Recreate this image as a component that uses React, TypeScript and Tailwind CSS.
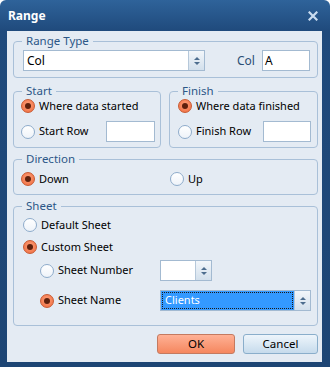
import React from "react";

const font = { fontFamily: '"Noto Sans", "Open Sans", sans-serif' };

function Radio({ on }: { on?: boolean }) {
  if (on)
    return (
      <span className="flex h-[14px] w-[14px] shrink-0 items-center justify-center rounded-full border border-[#c85a32] bg-[radial-gradient(circle_at_50%_40%,#ffa07a,#ee6a3c)]">
        <span className="h-[6px] w-[6px] rounded-full bg-[#5e200c]" />
      </span>
    );
  return (
    <span className="h-[14px] w-[14px] shrink-0 rounded-full border border-[#8eaccb] bg-[linear-gradient(#ffffff,#eef3f9)]" />
  );
}

function Spin() {
  return (
    <div className="flex w-[16px] shrink-0 flex-col items-center justify-center gap-[2px] border-l border-[#b6c8da] bg-[linear-gradient(#f2f6fa,#d3e0ec)]">
      <span className="h-0 w-0 border-x-[3px] border-b-[3px] border-x-transparent border-b-[#4d6d8e]" />
      <span className="h-0 w-0 border-x-[3px] border-t-[3px] border-x-transparent border-t-[#4d6d8e]" />
    </div>
  );
}

function Group({
  label,
  className,
  inner,
  children,
}: {
  label: string;
  className?: string;
  inner?: string;
  children: React.ReactNode;
}) {
  return (
    <fieldset className={"rounded-[4px] border border-[#a9c0d8] " + (className ?? "")}>
      <legend className="ml-[8px] px-[4px] text-[11.5px] leading-[14px] text-[#2c5787]">{label}</legend>
      <div className={inner}>{children}</div>
    </fieldset>
  );
}

export default function App() {
  return (
    <div
      className="flex h-[367px] w-[330px] flex-col rounded-t-[6px] bg-[linear-gradient(#2f639a,#1f4a7c_31px,#1d4574)] text-[11px] text-black"
      style={font}
    >
      <div className="flex h-[31px] shrink-0 items-center justify-between pl-[8px] pr-[12px]">
        <span className="text-[12px] font-bold text-white">Range</span>
        <svg width="10" height="10" viewBox="0 0 10 10">
          <path d="M1.5 1.5 L8.5 8.5 M8.5 1.5 L1.5 8.5" stroke="#c9dcf0" strokeWidth="2.2" strokeLinecap="square" />
        </svg>
      </div>
      <div className="ml-[7px] mr-[8px] flex h-[331px] flex-col bg-[#e4ebf3] pl-[6px] pr-[4px] pt-[3px]">
        {/* Range Type */}
        <Group label="Range Type" inner="pb-[6px] pl-[9px] pr-[7px]">
          <div className="mt-[2px] flex h-[21px] items-center">
            <div className="flex h-[21px] w-[182px] border border-[#a3bad1] bg-white">
              <span className="flex flex-1 items-center pl-[3px] text-[12px]">Col</span>
              <Spin />
            </div>
            <span className="ml-[32px] text-[12px] text-[#2c4f75]">Col</span>
            <div className="ml-[7px] flex h-[21px] w-[48px] items-center border border-[#a3bad1] bg-white pl-[2px] text-[12px]">
              A
            </div>
          </div>
        </Group>

        {/* Start / Finish */}
        <div className="mt-[6px] flex gap-[8px]">
          <Group label="Start" className="w-[148px]" inner="pb-[5px] pl-[7px] pr-[5px]">
            <div className="mt-[1px] flex h-[14px] items-center gap-[4px]">
              <Radio on />
              <span>Where data started</span>
            </div>
            <div className="mt-[8px] flex h-[21px] items-center gap-[4px]">
              <Radio />
              <span>Start Row</span>
              <div className="ml-auto h-[21px] w-[49px] border border-[#a3bad1] bg-white" />
            </div>
          </Group>
          <Group label="Finish" className="w-[149px]" inner="pb-[5px] pl-[8px] pr-[6px]">
            <div className="mt-[1px] flex h-[14px] items-center gap-[4px]">
              <Radio on />
              <span>Where data finished</span>
            </div>
            <div className="mt-[8px] flex h-[21px] items-center gap-[4px]">
              <Radio />
              <span>Finish Row</span>
              <div className="ml-auto h-[21px] w-[48px] border border-[#a3bad1] bg-white" />
            </div>
          </Group>
        </div>

        {/* Direction */}
        <Group label="Direction" className="mt-[4px]" inner="pb-[8px] pl-[7px]">
          <div className="mt-[6px] flex h-[14px] items-center">
            <div className="flex w-[149px] items-center gap-[4px]">
              <Radio on />
              <span>Down</span>
            </div>
            <div className="flex items-center gap-[4px]">
              <Radio />
              <span>Up</span>
            </div>
          </div>
        </Group>

        {/* Sheet */}
        <Group label="Sheet" className="mt-[4px]" inner="pb-[14px] pl-[9px] pr-[6px]">
          <div className="mt-[5px] flex h-[14px] items-center gap-[4px]">
            <Radio />
            <span>Default Sheet</span>
          </div>
          <div className="mt-[8px] flex h-[14px] items-center gap-[4px]">
            <Radio on />
            <span>Custom Sheet</span>
          </div>
          <div className="mt-[6px] flex h-[21px] items-center pl-[17px]">
            <div className="flex w-[120px] items-center gap-[4px]">
              <Radio />
              <span>Sheet Number</span>
            </div>
            <div className="flex h-[21px] w-[52px] border border-[#a3bad1] bg-white">
              <span className="flex-1" />
              <Spin />
            </div>
          </div>
          <div className="mt-[9px] flex h-[21px] items-center pl-[17px]">
            <div className="flex w-[120px] items-center gap-[4px]">
              <Radio on />
              <span>Sheet Name</span>
            </div>
            <div className="flex h-[21px] w-[151px] border border-[#a3bad1] bg-white">
              <div className="m-[1px] flex flex-1 items-center border border-dotted border-[#1a1a1a] bg-[#3399ff] pl-[2px] text-white outline outline-1 outline-[#3399ff]">
                Clients
              </div>
              <Spin />
            </div>
          </div>
        </Group>

        {/* Buttons */}
        <div className="mt-[8px] flex justify-end gap-[8px]">
          <button className="flex h-[20px] w-[78px] items-center justify-center rounded-[3px] border border-[#c47a60] bg-[linear-gradient(#ffb195,#f5875f)] text-[11.5px]">
            OK
          </button>
          <button className="flex h-[20px] w-[75px] items-center justify-center rounded-[3px] border border-[#8aaecb] bg-[linear-gradient(#eef5fb,#c6dbec)] text-[11.5px]">
            Cancel
          </button>
        </div>
      </div>
    </div>
  );
}
